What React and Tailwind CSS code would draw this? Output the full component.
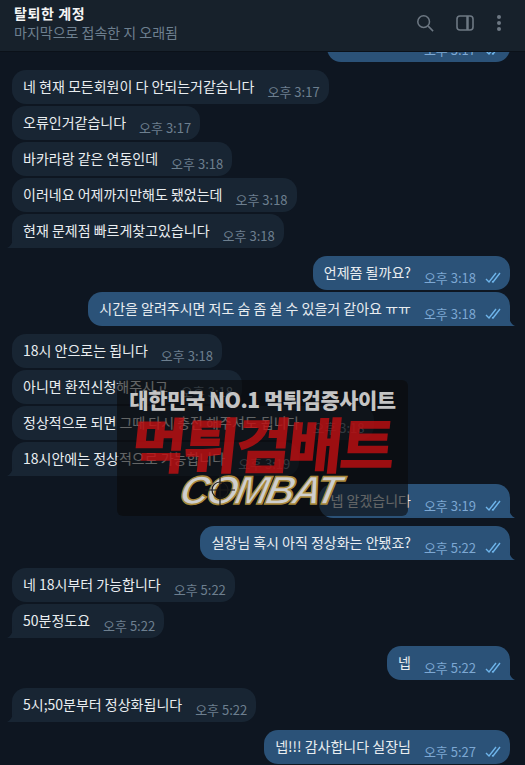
import React from 'react';

const messages = [
  { out: true, time: '오후 3:17', clip: true },
  { text: '네 현재 모든회원이 다 안되는거같습니다', time: '오후 3:17', gap: true },
  { text: '오류인거같습니다', time: '오후 3:17' },
  { text: '바카라랑 같은 연동인데', time: '오후 3:18' },
  { text: '이러네요 어제까지만해도 됐었는데', time: '오후 3:18' },
  { text: '현재 문제점 빠르게찾고있습니다', time: '오후 3:18', tail: true },
  { out: true, text: '언제쯤 될까요?', time: '오후 3:18', gap: true },
  { out: true, text: '시간을 알려주시면 저도 숨 좀 쉴 수 있을거 같아요 ㅠㅠ', time: '오후 3:18', tail: true },
  { text: '18시 안으로는 됩니다', time: '오후 3:18', gap: true },
  { text: '아니면 환전신청해주시고', time: '오후 3:18' },
  { text: '정상적으로 되면 그때 다시 충전 해주셔도 됩니다', time: '오후 3:18' },
  { text: '18시안에는 정상적으로 가능합니다', time: '오후 3:19', tail: true },
  { out: true, text: '넵 알겠습니다', time: '오후 3:19', gap: true, tail: true },
  { out: true, text: '실장님 혹시 아직 정상화는 안됐죠?', time: '오후 5:22', gap: true, tail: true },
  { text: '네 18시부터 가능합니다', time: '오후 5:22', gap: true },
  { text: '50분정도요', time: '오후 5:22', tail: true },
  { out: true, text: '넵', time: '오후 5:22', gap: true, tail: true },
  { text: '5시;50분부터 정상화됩니다', time: '오후 5:22', gap: true, tail: true },
  { out: true, text: '넵!!! 감사합니다 실장님', time: '오후 5:27', gap: true },
];

function Checks() {
  return (
    <svg width="17" height="11" viewBox="0 0 17 11" fill="none" stroke="#6eb4ea" strokeWidth="1.4" className="ml-[9px] mb-[1px] shrink-0">
      <path d="M1 7l3 3 7-9" />
      <path d="M7 9.500l1 .5 7-9" />
    </svg>
  );
}

function Tail({ out }) {
  return out ? (
    <svg width="8" height="12" viewBox="0 0 8 12" className="absolute bottom-0 right-[-6px]">
      <path d="M0 0C1 6 3 10 7 12H0z" fill="#2b5278" />
    </svg>
  ) : (
    <svg width="8" height="12" viewBox="0 0 8 12" className="absolute bottom-0 left-[-6px]">
      <path d="M8 0C7 6 5 10 1 12H8z" fill="#182533" />
    </svg>
  );
}

function Bubble({ m }) {
  const top = m.clip ? 'mt-[-24px]' : m.gap ? 'mt-[8px]' : 'mt-[2px]';
  return (
    <div className={`flex ${m.out ? 'justify-end pr-[15px]' : 'justify-start pl-[12px]'} ${top}`}>
      <div className={`relative flex h-[34px] items-center rounded-[14px] pl-[11px] ${m.out ? 'bg-[#2b5278] pr-[8px]' : 'bg-[#182533] pr-[9px]'} ${m.clip ? 'w-[183px]' : ''} ${m.tail ? (m.out ? 'rounded-br-none' : 'rounded-bl-none') : ''}`}>
        {m.text && <span className="mb-[3px] whitespace-nowrap text-[14px] leading-[18px] text-[#e9edf0]">{m.text}</span>}
        <span className={`ml-auto flex items-center self-end pb-[4px] pl-[13px] text-[13px] leading-[16px] ${m.out ? 'text-[#7da8d3]' : 'text-[#6d7f8f]'}`}>
          {m.time}
          {m.out && <Checks />}
        </span>
        {m.tail && <Tail out={m.out} />}
      </div>
    </div>
  );
}

export default function App() {
  return (
    <div className="relative flex h-[765px] w-[525px] flex-col overflow-hidden bg-[#0e1621] font-['Noto_Sans_CJK_KR','Liberation_Sans',sans-serif]">
      <header className="z-10 flex h-[52px] shrink-0 items-center justify-between border-b border-[#0b1119] bg-[#17212b] pb-[5px] pl-[14px] pr-[23px]">
        <div>
          <div className="text-[14px] font-bold leading-[19px] tracking-[0.6px] text-[#f5f5f5]">탈퇴한 계정</div>
          <div className="text-[14px] leading-[19px] text-[#6d7f8f]">마지막으로 접속한 지 오래됨</div>
        </div>
        <div className="flex items-center gap-[22px] text-[#6d7883]">
          <svg width="18" height="18" viewBox="0 0 20 20" fill="none" stroke="currentColor" strokeWidth="1.7">
            <circle cx="8.500" cy="8.500" r="6.500" />
            <path d="M13.500 13.500l5.500 5.500" />
          </svg>
          <svg width="18" height="16" viewBox="0 0 18 16" fill="none" stroke="currentColor" strokeWidth="1.6">
            <rect x="1" y="1" width="16" height="14" rx="3" />
            <path d="M11.500 1v14" strokeWidth="2.500" />
          </svg>
          <svg width="6" height="18" viewBox="0 0 6 18" fill="currentColor">
            <circle cx="3" cy="3" r="2" />
            <circle cx="3" cy="9" r="2" />
            <circle cx="3" cy="15" r="2" />
          </svg>
        </div>
      </header>

      <div className="flex-1 overflow-hidden">
        {messages.map((m, i) => (
          <Bubble key={i} m={m} />
        ))}
      </div>

      {/* watermark over the chat */}
      <div className="absolute left-[117px] top-[380px] flex h-[136px] w-[291px] flex-col items-center overflow-hidden rounded-[6px] bg-[#0a0a0a]/60">
        <div className="mt-[5px] whitespace-nowrap text-[21px] font-black leading-[28px] tracking-[-0.5px] text-[#c4c4c4]">대한민국 NO.1 먹튀검증사이트</div>
        <div className="mt-[-2px] -skew-x-6 whitespace-nowrap text-[60px] font-black leading-[62px] tracking-[-3px] text-[#c20f12]/80">먹튀검배트</div>
        <div className="relative mt-[-3px] ml-[-6px]">
          <div className="-skew-x-12 whitespace-nowrap font-['Liberation_Sans',sans-serif] text-[40px] font-bold italic leading-[40px] tracking-[-2.500px] text-[#cfcfcf] [-webkit-text-stroke:1.500px_#a8893c]">COMBAT</div>
          <svg width="36" height="36" viewBox="0 0 36 36" fill="none" stroke="#1a1a1a" strokeWidth="1.2" className="absolute left-[21px] top-[2px]">
            <circle cx="18" cy="18" r="8" />
            <path d="M3 18h30M18 3v30" />
          </svg>
        </div>
      </div>
    </div>
  );
}
